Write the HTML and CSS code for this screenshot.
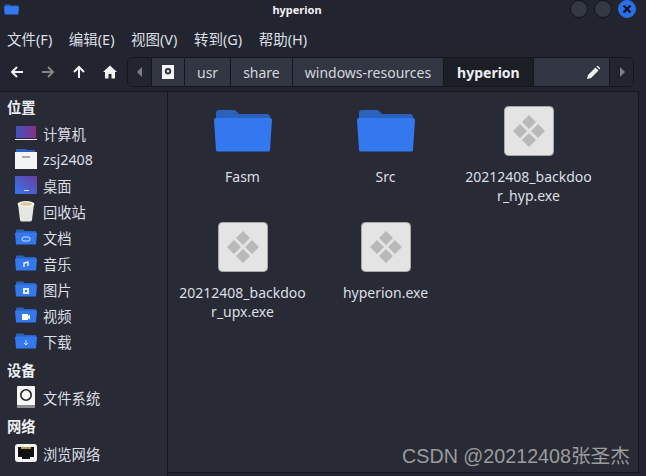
FILE: index.html
```html
<!DOCTYPE html>
<html lang="en">
<head>
    <meta charset="UTF-8">
    <title>hyperion</title>
    <link rel="stylesheet" href="styles.css">
</head>
<body>
    <svg class="sprites" width="0" height="0">
        <defs>
            <symbol id="folder" viewBox="0 0 58 42">
                <path d="M2 12V3Q2 0 5 0H20Q22 0 23 2L25 4H53Q56 4 56 7V12Z" fill="#2b62bd"/>
                <path d="M2 8H56Q58 8 58 10L56 40Q56 41.500 54 41.500H4Q2 41.500 2 40L0 10Q0 8 2 8Z" fill="#3378ef"/>
            </symbol>
            <symbol id="exe" viewBox="0 0 50 50">
                <rect x="0.500" y="0.500" width="49" height="49" rx="4" fill="#e4e4e4" stroke="#a9a9a9"/>
                <path d="M25 9L32 16L25 23L18 16ZM16 18L23 25L16 32L9 25ZM34 18L41 25L34 32L27 25ZM25 27L32 34L25 41L18 34Z" fill="#b9b9b9"/>
            </symbol>
            <symbol id="small-folder" viewBox="0 0 22 16">
                <path d="M1 5V1.500Q1 .5 2 .5H8L10 2H20Q21 2 21 3V5Z" fill="#2b62bd"/>
                <path d="M1 3.500H21Q22 3.500 22 4.500L21 15Q21 15.500 20 15.500H2Q1 15.500 1 15L0 4.500Q0 3.500 1 3.500Z" fill="#3378ef"/>
            </symbol>
        </defs>
    </svg>

    <div class="window">
        <!-- Title bar -->
        <header class="titlebar">
            <svg class="title-icon" width="15" height="11"><use href="#small-folder"/></svg>
            <span class="title-text">hyperion</span>
            <div class="win-buttons">
                <span class="win-btn"></span>
                <span class="win-btn"></span>
                <span class="win-btn close">
                    <svg width="10" height="10" viewBox="0 0 10 10"><path d="M1.500 1.500L8.500 8.500M8.500 1.500L1.500 8.500" stroke="#11141c" stroke-width="2.200"/></svg>
                </span>
            </div>
        </header>

        <!-- Menu bar -->
        <nav class="menubar">
            <span>文件(F)</span>
            <span>编辑(E)</span>
            <span>视图(V)</span>
            <span>转到(G)</span>
            <span>帮助(H)</span>
        </nav>

        <!-- Toolbar -->
        <div class="toolbar">
            <div class="nav-buttons">
                <svg width="14" height="14" viewBox="0 0 14 14"><path d="M13 7H2M7 2L2 7L7 12" fill="none" stroke="#f2f2f2" stroke-width="2"/></svg>
                <svg width="14" height="14" viewBox="0 0 14 14"><path d="M1 7H12M7 2L12 7L7 12" fill="none" stroke="#858585" stroke-width="2"/></svg>
                <svg width="14" height="14" viewBox="0 0 14 14"><path d="M7 13V2M2 7L7 2L12 7" fill="none" stroke="#f2f2f2" stroke-width="2"/></svg>
                <svg width="14" height="14" viewBox="0 0 14 14"><path d="M7 .5L14 7H12V13.500H8.500V9H5.500V13.500H2V7H0Z" fill="#f2f2f2"/></svg>
            </div>
            <div class="pathbar">
                <span class="path-arrow">
                    <svg width="6" height="10" viewBox="0 0 6 10"><path d="M5 0V10L0 5Z" fill="#7b7e85"/></svg>
                </span>
                <span class="crumb crumb-disk">
                    <svg width="12" height="14" viewBox="0 0 12 14"><path fill-rule="evenodd" d="M0 0H12V14H0ZM6 3A3.200 3.200 0 1 0 6 9.400A3.200 3.200 0 1 0 6 3ZM6 5A1.200 1.200 0 1 1 6 7.400A1.200 1.200 0 1 1 6 5Z" fill="#f4f4f4"/></svg>
                </span>
                <span class="crumb">usr</span>
                <span class="crumb">share</span>
                <span class="crumb">windows-resources</span>
                <span class="crumb current">hyperion</span>
                <span class="crumb-fill">
                    <svg width="13" height="13" viewBox="0 0 13 13"><path d="M0 13L1 9L8.500 1.500L11.500 4.500L4 12ZM9.500 .5L10 0Q10.500-.3 11 0L13 2Q13.300 2.500 13 3L12.500 3.500Z" fill="#f2f2f2"/></svg>
                </span>
                <span class="path-arrow right">
                    <svg width="6" height="10" viewBox="0 0 6 10"><path d="M1 0V10L6 5Z" fill="#7b7e85"/></svg>
                </span>
            </div>
        </div>

        <div class="main">
            <!-- Sidebar -->
            <aside class="sidebar">
                <h3>位置</h3>
                <div class="place">
                    <svg width="22" height="16" viewBox="0 0 22 16"><defs><linearGradient id="screen"><stop offset="0" stop-color="#3f55c0"/><stop offset="1" stop-color="#8a2f85"/></linearGradient></defs><rect x="1" y="1" width="20" height="12" fill="url(#screen)"/><rect y="14" width="22" height="1" fill="#eee"/></svg>
                    <span>计算机</span>
                </div>
                <div class="place">
                    <svg width="22" height="22" viewBox="0 0 22 22"><path d="M1 3V1H11L12 2H20V4H1Z" fill="#2b62bd"/><rect y="4" width="22" height="17" fill="#f4f4f4"/><rect x="7" y="8" width="8" height="2" fill="#aaa"/></svg>
                    <span>zsj2408</span>
                </div>
                <div class="place">
                    <svg width="22" height="18" viewBox="0 0 22 18"><defs><linearGradient id="desk" x1="0" y1="1" x2="1" y2="0"><stop offset="0" stop-color="#3378ef"/><stop offset="1" stop-color="#6a3d9e"/></linearGradient></defs><rect width="22" height="18" fill="url(#desk)"/><rect x="9" y="14" width="5" height="1" fill="#dfe6f5"/></svg>
                    <span>桌面</span>
                </div>
                <div class="place">
                    <svg width="22" height="22" viewBox="0 0 22 22"><path d="M3 4L5 20Q5.500 21.500 7 21.500H15Q16.500 21.500 17 20L19 4Z" fill="#e6e6e2"/><ellipse cx="11" cy="4" rx="8.500" ry="3" fill="#f6f6f2" /><ellipse cx="11" cy="4" rx="6" ry="1.800" fill="#d9c98f"/></svg>
                    <span>回收站</span>
                </div>
                <div class="place">
                    <svg width="22" height="16"><use href="#small-folder"/><rect x="7" y="8" width="8" height="4" rx="2" fill="none" stroke="#cfe0fb"/></svg>
                    <span>文档</span>
                </div>
                <div class="place">
                    <svg width="22" height="16"><use href="#small-folder"/><path d="M9 12V8L13 7V11" fill="none" stroke="#fff" stroke-width="1.300"/></svg>
                    <span>音乐</span>
                </div>
                <div class="place">
                    <svg width="22" height="16"><use href="#small-folder"/><rect x="8" y="7" width="6" height="6" fill="#e6eefc"/><rect x="10" y="9" width="2" height="2" fill="#3378ef"/></svg>
                    <span>图片</span>
                </div>
                <div class="place">
                    <svg width="22" height="16"><use href="#small-folder"/><path d="M7 7H13V9L15 7.500V12.500L13 11V13H7Z" fill="#fff"/></svg>
                    <span>视频</span>
                </div>
                <div class="place">
                    <svg width="22" height="16"><use href="#small-folder"/><path d="M11 7V12M9 10L11 12L13 10" fill="none" stroke="#cfe0fb"/></svg>
                    <span>下载</span>
                </div>
                <h3>设备</h3>
                <div class="place">
                    <svg width="18" height="22" viewBox="0 0 18 22"><rect width="18" height="22" rx="1" fill="#f6f6f6"/><circle cx="9" cy="9" r="5.200" fill="none" stroke="#222" stroke-width="1.600"/><rect y="19" width="18" height="3" fill="#8d8d8d"/></svg>
                    <span>文件系统</span>
                </div>
                <h3>网络</h3>
                <div class="place">
                    <svg width="22" height="19" viewBox="0 0 22 19"><rect width="22" height="18" rx="3" fill="#f6f6f6"/><path d="M3 3H19V13H15V15H7V13H3Z" fill="#111"/><path d="M6 3H16V5H6Z" fill="#b39a4a"/></svg>
                    <span>浏览网络</span>
                </div>
            </aside>

            <!-- Files -->
            <section class="files">
                <div class="file">
                    <svg class="file-icon" width="58" height="42"><use href="#folder"/></svg>
                    <span class="file-name">Fasm</span>
                </div>
                <div class="file">
                    <svg class="file-icon" width="58" height="42"><use href="#folder"/></svg>
                    <span class="file-name">Src</span>
                </div>
                <div class="file">
                    <svg width="50" height="50"><use href="#exe"/></svg>
                    <span class="file-name">20212408_backdoo<br>r_hyp.exe</span>
                </div>
                <div class="file">
                    <svg width="50" height="50"><use href="#exe"/></svg>
                    <span class="file-name">20212408_backdoo<br>r_upx.exe</span>
                </div>
                <div class="file">
                    <svg width="50" height="50"><use href="#exe"/></svg>
                    <span class="file-name">hyperion.exe</span>
                </div>
            </section>
        </div>

        <div class="watermark">CSDN @20212408张圣杰</div>
    </div>
</body>
</html>
```

FILE: styles.css
```css
/* General Styles */
html, body {
    margin: 0;
    padding: 0;
    height: 100%;
    overflow: hidden;
}

body {
    font-family: "Noto Sans", "Noto Sans CJK SC", sans-serif;
    font-size: 14.3px;
    color: #e4e6ea;
    background-color: #22252f;
}

.sprites {
    position: absolute;
}

.window {
    position: relative;
    display: flex;
    flex-direction: column;
    width: 646px;
    height: 476px;
    background-color: #22252f;
}

/* Title bar */
.titlebar {
    position: relative;
    display: flex;
    align-items: center;
    justify-content: center;
    height: 18px;
    padding-right: 52px;
}

.title-icon {
    position: absolute;
    left: 4px;
    top: 4px;
}

.title-text {
    font-size: 11px;
    font-weight: 700;
    color: #f0f0f0;
}

.win-buttons {
    position: absolute;
    right: 10px;
    top: 0;
    display: flex;
    gap: 6px;
}

.win-btn {
    display: flex;
    align-items: center;
    justify-content: center;
    box-sizing: border-box;
    width: 18px;
    height: 18px;
    border-radius: 50%;
    background-color: #343844;
    border: 1px solid #12141a;
}

.win-btn.close {
    background-color: #2a6fe8;
    border-color: #2a6fe8;
}

/* Menu bar */
.menubar {
    display: flex;
    align-items: center;
    gap: 16.500px;
    height: 34px;
    padding: 6px 7px 0;
    box-sizing: border-box;
    font-size: 14.500px;
    color: #dcdfe4;
}

/* Toolbar */
.toolbar {
    display: flex;
    align-items: center;
    height: 39px;
    padding: 5px 12px 4px 10px;
    box-sizing: border-box;
    font-size: 14px;
}

.nav-buttons {
    display: flex;
    gap: 17px;
    width: 117px;
    flex-shrink: 0;
}

.pathbar {
    display: flex;
    flex: 1;
    height: 30px;
    box-sizing: border-box;
    border: 1px solid #14161c;
    border-radius: 6px;
    overflow: hidden;
    background-color: #323642;
}

.path-arrow {
    display: flex;
    align-items: center;
    justify-content: center;
    width: 23px;
    background-color: #22252f;
    border-right: 1px solid #14161c;
}

.path-arrow.right {
    border-right: none;
    border-left: 1px solid #14161c;
}

.crumb {
    display: flex;
    align-items: center;
    padding: 0 12px;
    background-color: #323642;
    border-right: 1px solid #14161c;
    color: #d4d7dc;
}

.crumb-disk {
    padding: 0 10px;
}

.crumb.current {
    padding: 0 13px;
    font-weight: 700;
    color: #eceef1;
    background-color: #1c1e26;
}

.crumb-fill {
    flex: 1;
    display: flex;
    align-items: center;
    justify-content: flex-end;
    padding-right: 9px;
}

/* Sidebar */
.main {
    display: flex;
    flex: 1;
    min-height: 0;
    margin-right: 7px;
    border-top: 1px solid #14161c;
}

.sidebar {
    width: 168px;
    flex-shrink: 0;
    box-sizing: border-box;
    background-color: #282a36;
    border-right: 1px solid #14161c;
}

.sidebar h3 {
    box-sizing: border-box;
    margin: 0;
    height: 30px;
    padding: 4px 0 0 7px;
    line-height: 26px;
    font-size: 14.300px;
    font-weight: 700;
    color: #eceef1;
}

.sidebar h3:first-child {
    height: 28px;
    line-height: 24px;
}

.place {
    display: flex;
    align-items: center;
    height: 26px;
    color: #dcdfe4;
}

.place svg {
    width: 22px;
    margin: 0 6px 0 15px;
    flex-shrink: 0;
}

/* File grid */
.files {
    flex: 1;
    display: grid;
    grid-template-columns: repeat(3, 143px);
    grid-auto-rows: 116px;
    padding: 14px 0 0 3px;
    margin-bottom: 3px;
    align-content: start;
    background-color: #282a36;
    border-right: 1px solid #14161c;
    border-bottom: 1px solid #14161c;
    font-size: 14px;
}

.file {
    display: flex;
    flex-direction: column;
    align-items: center;
}

.file-icon {
    margin-top: 4px;
    margin-bottom: 4px;
}

.file-name {
    margin-top: 11px;
    text-align: center;
    line-height: 19px;
    color: #dcdfe4;
}

.watermark {
    position: absolute;
    right: 16px;
    bottom: 7px;
    font-family: "Liberation Sans", "Noto Sans CJK SC", sans-serif;
    font-size: 19.700px;
    color: #9c9c9c;
}
```
